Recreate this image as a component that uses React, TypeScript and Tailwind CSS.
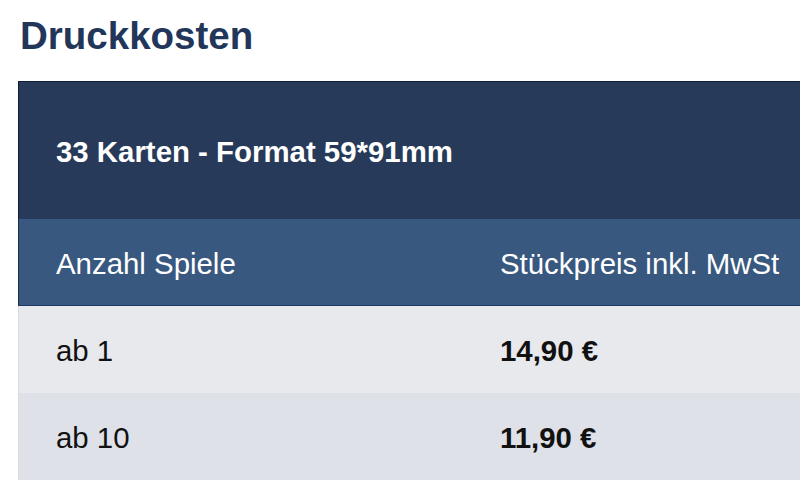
export default function App() {
  const rows = [
    { qty: "ab 1", price: "14,90 €", bg: "bg-[#e8e9ed]" },
    { qty: "ab 10", price: "11,90 €", bg: "bg-[#dfe1e8]" },
  ];

  return (
    <div className="h-[483px] w-[800px] overflow-hidden bg-white font-['Liberation_Sans',Arial,sans-serif]">
      <h1 className="pl-[20px] pt-[17px] text-[38.5px] font-bold leading-[38px] text-[#22365a]">
        Druckkosten
      </h1>

      <div className="ml-[18px] mt-[26px] w-[960px]">
        <div className="flex h-[138px] items-center border-l border-t border-[#111c36] bg-[#273a59] pl-[37px] pt-[3px]">
          <span className="text-[29.4px] font-bold text-white">
            33 Karten - Format 59*91mm
          </span>
        </div>

        <div className="grid h-[87px] grid-cols-[481px_1fr] items-center border-b border-l border-[#1e3766] border-l-[#1a2c52] bg-[#38587f] pt-[5px] text-[29.4px] text-white">
          <div className="pl-[37px]">Anzahl Spiele</div>
          <div>Stückpreis inkl. MwSt</div>
        </div>

        {rows.map((r) => (
          <div
            key={r.qty}
            className={`grid h-[87px] grid-cols-[481px_1fr] items-center border-l border-[#d9dbe0] pt-[3px] text-[29.4px] text-[#111] ${r.bg}`}
          >
            <div className="pl-[37px]">{r.qty}</div>
            <div className="font-bold">{r.price}</div>
          </div>
        ))}
      </div>
    </div>
  );
}
